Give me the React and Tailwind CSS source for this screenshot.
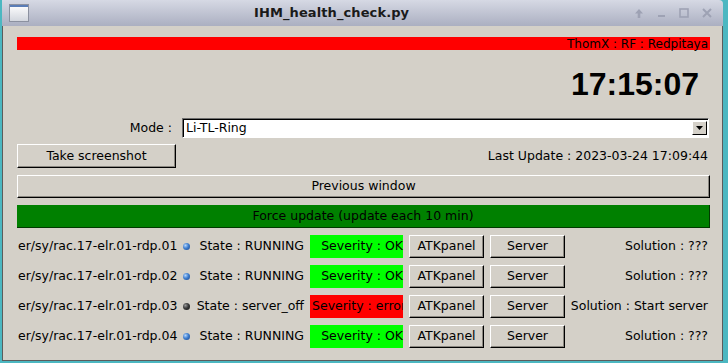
import React from 'react'

const devices = [
  { name: 'er/sy/rac.17-elr.01-rdp.01', state: 'RUNNING', ok: true, solution: '???' },
  { name: 'er/sy/rac.17-elr.01-rdp.02', state: 'RUNNING', ok: true, solution: '???' },
  { name: 'er/sy/rac.17-elr.01-rdp.03', state: 'server_off', ok: false, solution: 'Start server' },
  { name: 'er/sy/rac.17-elr.01-rdp.04', state: 'RUNNING', ok: true, solution: '???' },
]

// Qt-style raised button bevel
const bevel =
  'border border-t-white border-l-white border-r-black border-b-black shadow-[inset_-1px_-1px_0_#8a8780] bg-[#d4d0c8] text-black flex items-center justify-center'

function TitleButtons() {
  return (
    <div className="flex items-center gap-[13px] mr-[11px] text-[#9ea2b4]">
      {/* keep above */}
      <svg width="10" height="11" viewBox="0 0 10 11">
        <path d="M5 1 L9 5.5 H6.3 V10 H3.7 V5.5 H1 Z" fill="currentColor" />
      </svg>
      {/* minimize */}
      <svg width="9" height="10" viewBox="0 0 9 10">
        <rect x="1" y="7" width="7" height="2" fill="currentColor" />
      </svg>
      {/* maximize */}
      <svg width="10" height="10" viewBox="0 0 10 10">
        <rect x="1" y="1" width="8" height="8" fill="none" stroke="currentColor" strokeWidth="1.6" />
      </svg>
      {/* close */}
      <svg width="10" height="10" viewBox="0 0 10 10">
        <path d="M1 1 L9 9 M9 1 L1 9" stroke="currentColor" strokeWidth="2" />
      </svg>
    </div>
  )
}

function Led({ on }) {
  return (
    <div
      className={
        on
          ? 'w-[7px] h-[7px] rounded-full bg-[radial-gradient(circle_at_35%_35%,#b6d6fb_0%,#3f7fd0_45%,#173f86_100%)]'
          : 'w-[7px] h-[7px] rounded-full bg-[radial-gradient(circle_at_35%_35%,#9a9a9a_0%,#3a3a3a_45%,#111111_100%)]'
      }
    />
  )
}

function DeviceRow({ name, state, ok, solution }) {
  return (
    <div className="flex items-center h-[23px] mt-[7px] whitespace-nowrap">
      <div className="w-[163px] pl-[1px]">{name}</div>
      <div className="w-[12px] flex justify-center">
        <Led on={ok} />
      </div>
      <div className="w-[112px] text-right">State : {state}</div>
      {ok ? (
        <div className="ml-[6px] w-[93px] h-full bg-[#00ff00] flex items-center justify-end overflow-hidden">
          Severity : OK
        </div>
      ) : (
        <div className="ml-[6px] w-[93px] h-full bg-[#ff0000] flex items-center justify-start pl-[2px] overflow-hidden">
          Severity : error
        </div>
      )}
      <button className={`${bevel} ml-[6px] w-[75px] h-full`}>ATKpanel</button>
      <button className={`${bevel} ml-[6px] w-[75px] h-full`}>Server</button>
      <div className="flex-1 text-right pr-[2px]">Solution : {solution}</div>
    </div>
  )
}

export default function App() {
  return (
    <div className="w-[728px] h-[363px] bg-[#4cb7c1] overflow-hidden font-['DejaVu_Sans',sans-serif] text-[12.5px] text-black">
      <div className="ml-[2px] w-[721px] h-[361px] flex flex-col">
        {/* Title bar */}
        <div className="h-[26px] flex items-center bg-gradient-to-b from-[#d6d9e4] to-[#abafc1] rounded-tr-[4px]">
          <div className="ml-[7px] w-[20px] h-[18px] border border-[#8c91a0] bg-gradient-to-b from-white to-[#d3d6de] flex flex-col">
            <div className="h-[2px] bg-[#5a7db7]" />
          </div>
          <div className="ml-[225px] font-bold text-[13px] text-[#1a1a1a] tracking-[0.1px]">IHM_health_check.py</div>
          <div className="flex-1" />
          <TitleButtons />
        </div>

        {/* Window body */}
        <div className="flex-1 bg-[#d4d0c8] border-l border-r border-b border-[#5c5c5c] pl-[14px] pr-[12px] flex flex-col">
          <div className="mt-[11px] h-[13px] bg-[#ff0000] flex items-center justify-end pr-[2px] leading-none text-[12px]">
            ThomX : RF : Redpitaya
          </div>

          <div className="mt-[18px] h-[32px] flex justify-end pr-[11px] font-['Liberation_Sans',Arial,sans-serif] font-bold text-[32px] leading-[32px]">
            17:15:07
          </div>

          {/* Mode selector */}
          <div className="mt-[18px] h-[20px] flex items-center">
            <div className="w-[155px] text-right">Mode :</div>
            <div className="ml-[10px] flex-1 mr-[1px] h-full bg-white border border-t-[#6e6e6e] border-l-[#6e6e6e] border-b-white border-r-white shadow-[inset_1px_1px_0_#000] flex items-center">
              <div className="pl-[3px] flex-1">Li-TL-Ring</div>
              <div className="w-[15px] h-[14px] mr-[1px] border border-t-white border-l-white border-r-black border-b-black bg-[#d4d0c8] flex items-center justify-center">
                <svg width="7" height="4" viewBox="0 0 7 4">
                  <path d="M0 0 H7 L3.5 4 Z" fill="#000" />
                </svg>
              </div>
            </div>
          </div>

          <div className="mt-[6px] h-[24px] flex items-center">
            <button className={`${bevel} w-[159px] h-full`}>Take screenshot</button>
            <div className="flex-1 text-right pr-[2px]">Last Update : 2023-03-24 17:09:44</div>
          </div>

          <button className={`${bevel} mt-[7px] h-[23px] w-full`}>Previous window</button>

          <button className="mt-[7px] h-[23px] w-full bg-[#008000] border-r border-b border-[#003a00] flex items-center justify-center">
            Force update (update each 10 min)
          </button>

          {devices.map((d) => (
            <DeviceRow key={d.name} {...d} />
          ))}
        </div>
      </div>
    </div>
  )
}
